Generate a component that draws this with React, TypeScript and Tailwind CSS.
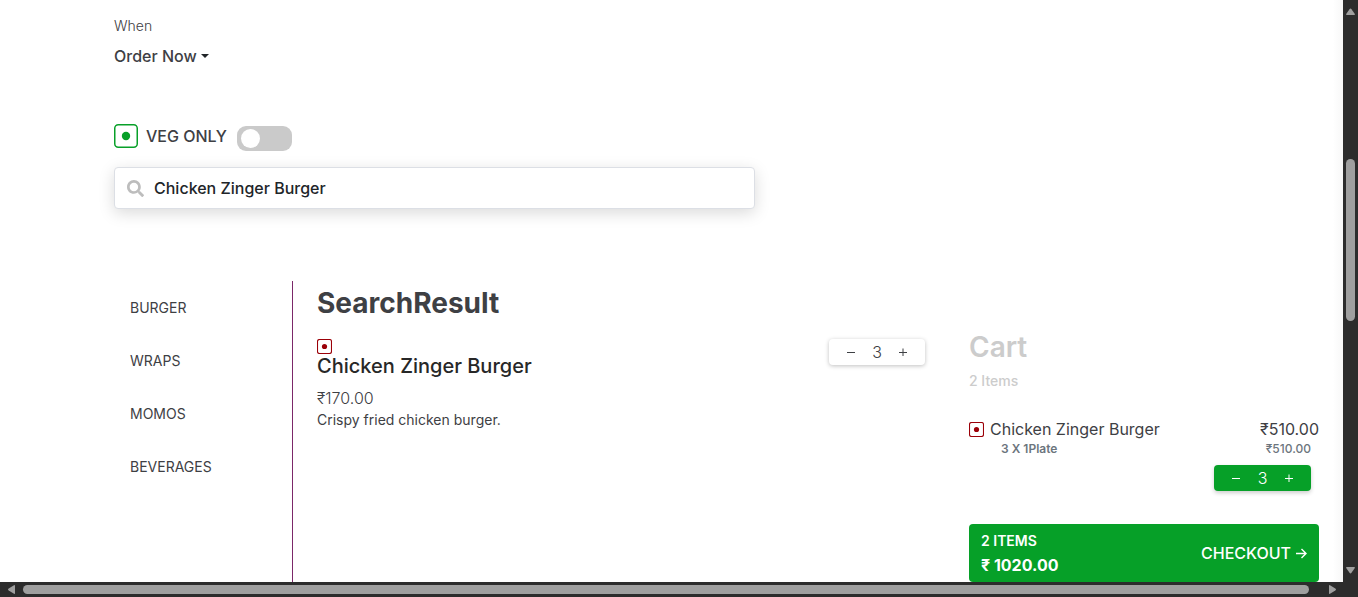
import { useState } from "react";

const categories = ["BURGER", "WRAPS", "MOMOS", "BEVERAGES"];

function DietMark({ large = false, veg = false }: { large?: boolean; veg?: boolean }) {
  const color = veg ? "#08a029" : "#9b0008";
  return large ? (
    <svg className="size-6 shrink-0" viewBox="0 0 24 24" fill="none" aria-hidden="true">
      <rect x="0.75" y="0.75" width="22.5" height="22.5" rx="3.5" stroke={color} strokeWidth="1.5" />
      <circle cx="12" cy="12" r="4.2" fill={color} />
    </svg>
  ) : (
    <svg className="size-[15px] shrink-0" viewBox="0 0 15 15" fill="none" aria-hidden="true">
      <rect x="0.5" y="0.5" width="14" height="14" rx="2" stroke={color} strokeWidth="1.1" />
      <circle cx="7.5" cy="7.5" r="2.6" fill={color} />
    </svg>
  );
}

function Stepper({
  value,
  onChange,
  green = false,
}: {
  value: number;
  onChange: (n: number) => void;
  green?: boolean;
}) {
  return (
    <div
      className={
        green
          ? "flex h-[26px] w-[97px] items-center justify-between rounded bg-[#06a028] px-4 text-white shadow-[0_2px_4px_rgba(0,0,0,0.2)]"
          : "flex h-[26px] w-24 items-center justify-between rounded bg-white px-4 text-[#3e4044] shadow-[0_1px_4px_rgba(0,0,0,0.25)]"
      }
    >
      <button type="button" aria-label="Decrease quantity" className="flex h-full w-3 items-center justify-center" onClick={() => onChange(Math.max(0, value - 1))}>
        <svg className="h-2 w-2" viewBox="0 0 8 8" stroke="currentColor" aria-hidden="true">
          <path d="M0 4.5H8" />
        </svg>
      </button>
      <span className="text-base leading-6 font-light">{value}</span>
      <button type="button" aria-label="Increase quantity" className="flex h-full w-3 items-center justify-center" onClick={() => onChange(value + 1)}>
        <svg className="h-2 w-2" viewBox="0 0 8 8" stroke="currentColor" aria-hidden="true">
          <path d="M0 4.5H8M4 0.5V8" />
        </svg>
      </button>
    </div>
  );
}

function VerticalBar() {
  return (
    <div className="flex flex-col items-center bg-[#2c2c2c] pt-2 pb-2" aria-hidden="true">
      <svg className="h-2 w-[9px]" viewBox="0 0 9 8" fill="#9f9f9f">
        <path d="M4.5 0.5Q5 0.5 5.5 1.2L8.8 6Q9.2 7 8.3 7H0.7Q-0.2 7 0.2 6L3.5 1.2Q4 0.5 4.5 0.5Z" />
      </svg>
      <div className="grow-[143]" />
      <div className="w-[9px] grow-[162] rounded-full bg-[#9f9f9f]" />
      <div className="grow-[245]" />
      <svg className="h-2 w-[9px]" viewBox="0 0 9 8" fill="#9f9f9f">
        <path d="M4.5 7.5Q5 7.5 5.5 6.8L8.8 2Q9.2 1 8.3 1H0.7Q-0.2 1 0.2 2L3.5 6.8Q4 7.5 4.5 7.5Z" />
      </svg>
    </div>
  );
}

function HorizontalBar() {
  return (
    <div className="col-span-2 flex items-center bg-[#2c2c2c] pr-[22px] pl-2" aria-hidden="true">
      <svg className="h-[9px] w-2" viewBox="0 0 8 9" fill="#9f9f9f">
        <path d="M0 4.5Q0 4 0.7 3.5L6 0.2Q7 -0.2 7 0.7V8.3Q7 9.2 6 8.8L0.7 5.5Q0 5 0 4.5Z" />
      </svg>
      <div className="ml-[7px] h-[9px] grow rounded-full bg-[#9f9f9f]" />
      <svg className="ml-[19px] h-[9px] w-2" viewBox="0 0 8 9" fill="#9f9f9f">
        <path d="M8 4.5Q8 4 7.3 3.5L2 0.2Q1 -0.2 1 0.7V8.3Q1 9.2 2 8.8L7.3 5.5Q8 5 8 4.5Z" />
      </svg>
    </div>
  );
}

export default function App() {
  const [quantity, setQuantity] = useState(3);
  const [query, setQuery] = useState("Chicken Zinger Burger");
  const [vegOnly, setVegOnly] = useState(false);
  const total = (170 * quantity).toFixed(2);

  return (
    <div className="grid h-screen grid-cols-[minmax(0,1fr)_15px] grid-rows-[minmax(0,1fr)_15px] bg-white font-['Inter','Noto_Sans',sans-serif] text-[#3e4044]">
      <main className="flex flex-col overflow-hidden bg-[linear-gradient(to_left,#f7f7f7,#ffffff_10px)] pt-3.5 pr-6 pl-[114px]">
        <p className="text-sm leading-6 font-light">When</p>
        <button type="button" className="mt-1.5 flex items-center gap-1 self-start text-base leading-6 font-medium">
          Order Now
          <svg className="h-1 w-2" viewBox="0 0 8 4" fill="#212529" aria-hidden="true">
            <path d="M0 0H8L4 4Z" />
          </svg>
        </button>

        <div className="mt-14 flex h-7 items-start">
          <DietMark large veg />
          <label htmlFor="veg-only" className="ml-2 text-base leading-6 font-medium">
            VEG ONLY
          </label>
          <input
            id="veg-only"
            type="checkbox"
            role="switch"
            checked={vegOnly}
            onChange={(e) => setVegOnly(e.target.checked)}
            className="mt-0.5 ml-2.5 flex h-[25px] w-[55px] appearance-none items-center rounded-[9px] bg-[#cacaca] pl-1 before:size-[19px] before:rounded-full before:bg-white checked:bg-[#06a028] checked:before:ml-7"
          />
        </div>

        <div className="mt-[15px] flex h-[42px] w-1/2 max-w-[641px] min-w-[641px] items-center gap-2.5 rounded border border-[#dcdfe5] bg-white pr-3 pl-3 shadow-[0_4px_16px_rgba(0,0,0,0.15)]">
          <svg className="size-[17px] shrink-0" viewBox="0 0 512 512" fill="#bdbdbd" aria-hidden="true">
            <path d="M505 442.7 405.3 343c-4.500-4.500-10.600-7-17-7H372c27.600-35.300 44-79.700 44-128C416 93.100 322.900 0 208 0S0 93.100 0 208s93.100 208 208 208c48.300 0 92.700-16.400 128-44v16.300c0 6.400 2.500 12.500 7 17l99.700 99.700c9.400 9.400 24.600 9.400 33.900 0l28.300-28.300c9.400-9.400 9.400-24.600.1-34zM208 336c-70.700 0-128-57.200-128-128 0-70.700 57.200-128 128-128 70.700 0 128 57.200 128 128 0 70.700-57.200 128-128 128z" />
          </svg>
          <input
            type="text"
            aria-label="Search dishes"
            value={query}
            onChange={(e) => setQuery(e.target.value)}
            className="min-w-0 flex-1 bg-transparent text-base leading-6 font-medium text-[#212529] outline-none"
          />
        </div>

        <div className="mt-[72px] flex min-h-0 flex-1 items-stretch">
          <nav className="w-[179px] shrink-0 border-r border-[#7b2869] pl-4" aria-label="Categories">
            <ul>
              {categories.map((name) => (
                <li key={name} className="flex h-[53px] items-center">
                  <a href={"#" + name.toLowerCase()} className="text-sm leading-6">
                    {name}
                  </a>
                </li>
              ))}
            </ul>
          </nav>

          <section className="flex-1 pt-1 pl-6">
            <h1 className="text-[28px] leading-9 font-bold">SearchResult</h1>
            <div className="mt-[18px] flex items-start justify-between">
              <div>
                <DietMark />
                <h2 className="text-xl leading-6 font-medium text-[#272727]">Chicken Zinger Burger</h2>
                <p className="mt-2 text-base leading-6 font-light">₹170.00</p>
                <p className="text-sm leading-5">Crispy fried chicken burger.</p>
              </div>
              <Stepper value={quantity} onChange={setQuantity} />
            </div>
          </section>

          <aside className="ml-11 w-[350px] shrink-0 pt-12">
            <h2 className="text-[28px] leading-9 font-semibold text-[#cccccc]">Cart</h2>
            <p className="mt-1 text-sm leading-6 font-medium text-[#cccccc]">2 Items</p>
            <div className="mt-6 flex justify-between">
              <div>
                <div className="flex items-center gap-1.5">
                  <DietMark />
                  <span className="text-base leading-6">Chicken Zinger Burger</span>
                </div>
                <p className="pl-8 text-xs leading-4 font-semibold text-[#6c757d]">{quantity} X 1Plate</p>
              </div>
              <div className="flex flex-col items-end">
                <span className="text-base leading-6">₹{total}</span>
                <span className="pr-2 text-xs leading-4 font-medium text-[#6c757d]">₹{total}</span>
                <div className="mt-2 pr-2">
                  <Stepper green value={quantity} onChange={setQuantity} />
                </div>
              </div>
            </div>
            <button type="button" className="mt-[33px] flex h-[58px] w-full items-center justify-between rounded bg-[#06a028] px-3 text-left text-white">
              <span>
                <span className="block text-sm leading-6 font-semibold">2 ITEMS</span>
                <span className="block text-base leading-6 font-bold">₹ 1020.00</span>
              </span>
              <span className="flex items-center gap-1 text-base leading-6 font-medium">
                CHECKOUT
                <svg className="size-3" viewBox="0 0 12 12" fill="none" stroke="currentColor" strokeWidth="1.4" aria-hidden="true">
                  <path d="M1 6.500H10.500M6.500 2L11 6.500L6.500 11" />
                </svg>
              </span>
            </button>
          </aside>
        </div>
      </main>
      <VerticalBar />
      <HorizontalBar />
    </div>
  );
}
